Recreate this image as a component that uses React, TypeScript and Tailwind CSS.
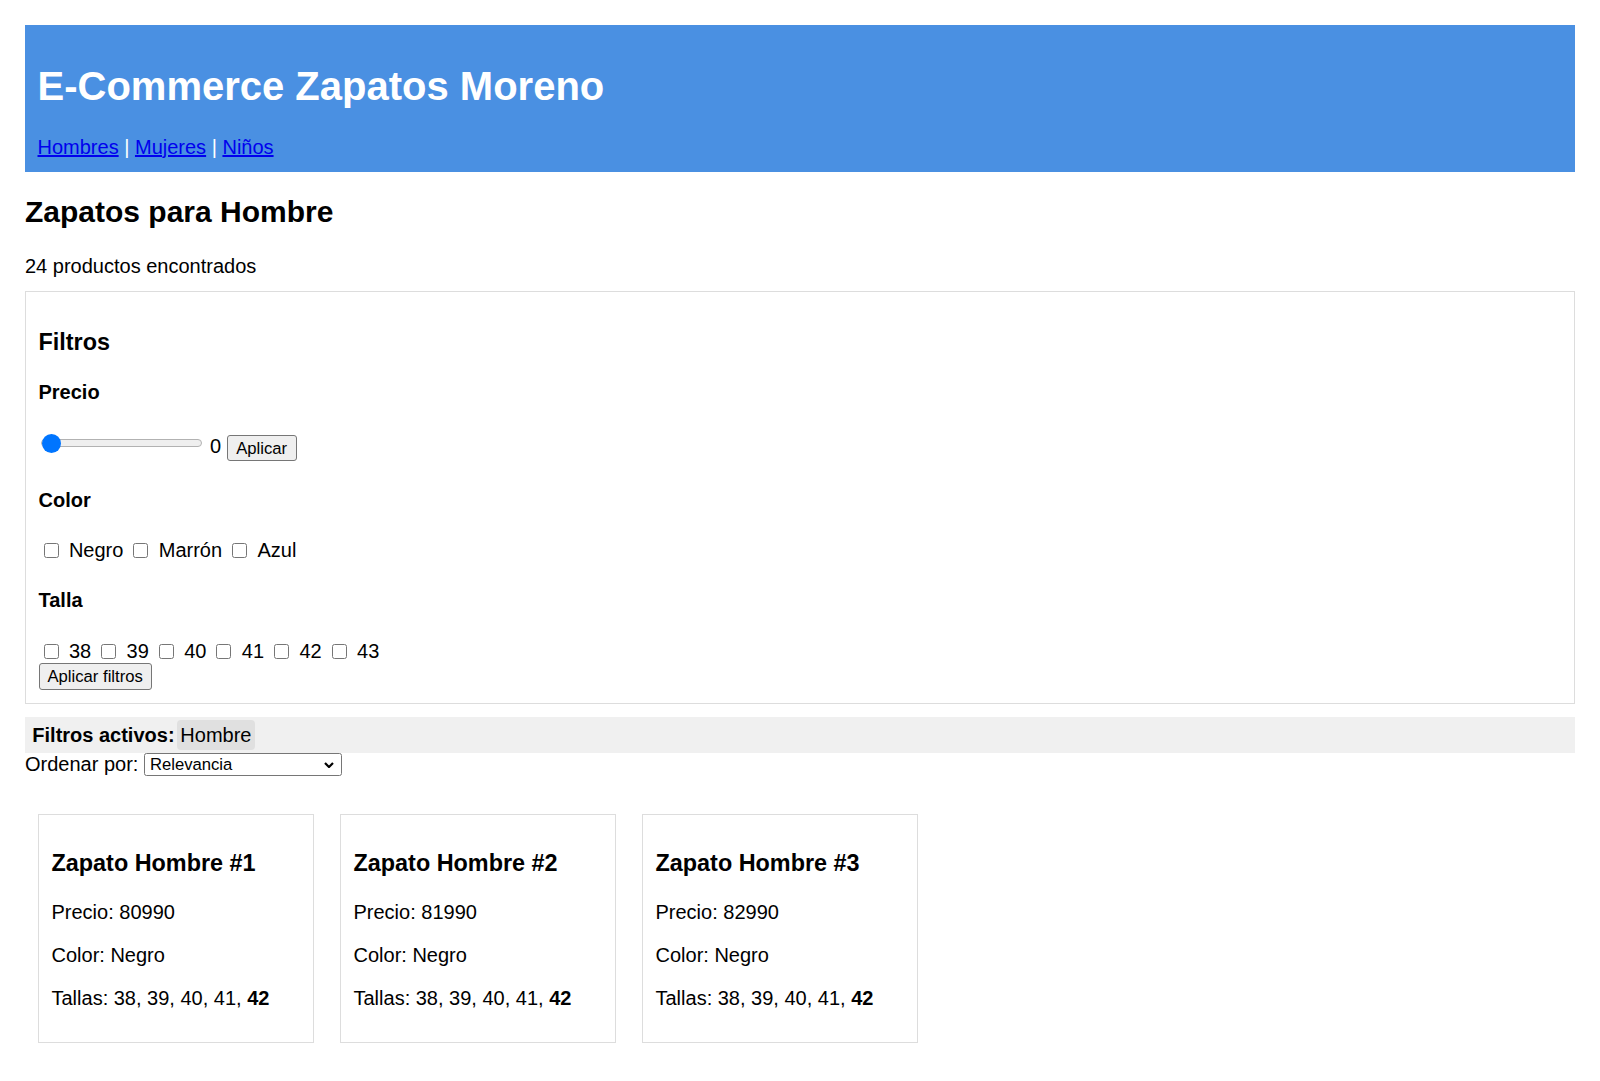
const COLORS = ["Negro", "Marrón", "Azul"];
const SIZES = ["38", "39", "40", "41", "42", "43"];

const products = [
  { id: 1, precio: 80990 },
  { id: 2, precio: 81990 },
  { id: 3, precio: 82990 },
];

function Check({ label }: { label: string }) {
  return (
    <label className="flex items-center">
      <input type="checkbox" className="m-0 ml-[5px] mr-[10.4px] h-[15px] w-[15px]" />
      <span className="mr-[5px]">{label}</span>
    </label>
  );
}

export default function App() {
  return (
    <div className="min-h-screen bg-white p-[25px] pb-0 font-['Liberation_Sans',Arial,Helvetica,sans-serif] text-[20px] leading-[23px] text-black">
      <header className="bg-[#4a90e2] px-[12.5px] pb-[13px] pt-[12.5px] text-white">
        <h1 className="mb-[27px] mt-[25px] text-[40px] font-bold leading-[46px]">E-Commerce Zapatos Moreno</h1>
        <nav>
          <a href="#" className="text-[#0000ee] underline">
            Hombres
          </a>{" "}
          |{" "}
          <a href="#" className="text-[#0000ee] underline">
            Mujeres
          </a>{" "}
          |{" "}
          <a href="#" className="text-[#0000ee] underline">
            Niños
          </a>
        </nav>
      </header>

      <h2 className="mb-[25.3px] mt-[23.4px] text-[30px] font-bold leading-[34.5px]">Zapatos para Hombre</h2>
      <p className="mb-[13px]">24 productos encontrados</p>

      <section className="border border-[#dddddd] px-[12.5px] pb-[13.3px] pt-[12.5px]">
        <h3 className="mt-[25px] text-[23.4px] font-bold leading-[27px]">Filtros</h3>

        <h4 className="mt-[25.3px] font-bold">Precio</h4>
        <div className="mt-[31px] flex h-[26px] items-start">
          <input
            type="range"
            min={0}
            max={200000}
            defaultValue={0}
            className="mx-[2.5px] mt-[-2px] h-[20px] w-[161px] appearance-none bg-transparent [&::-webkit-slider-runnable-track]:h-[8px] [&::-webkit-slider-runnable-track]:rounded-full [&::-webkit-slider-runnable-track]:border [&::-webkit-slider-runnable-track]:border-[#b2b2b2] [&::-webkit-slider-runnable-track]:bg-[#efefef] [&::-webkit-slider-thumb]:mt-[-6.5px] [&::-webkit-slider-thumb]:h-[19px] [&::-webkit-slider-thumb]:w-[19px] [&::-webkit-slider-thumb]:appearance-none [&::-webkit-slider-thumb]:rounded-full [&::-webkit-slider-thumb]:bg-[#0075ff]"
          />
          <span className="ml-[5.5px]">0</span>
          <button className="ml-[5.5px] h-[26px] rounded-[3px] border border-[#767676] bg-[#efefef] px-[8.5px] text-[16.67px] leading-[19px]">
            Aplicar
          </button>
        </div>

        <h4 className="mt-[27.7px] font-bold">Color</h4>
        <div className="mt-[27px] flex h-[23px] items-center">
          {COLORS.map((c) => (
            <Check key={c} label={c} />
          ))}
        </div>

        <h4 className="mt-[27px] font-bold">Talla</h4>
        <div className="mt-[28px] flex h-[23px] items-center">
          {SIZES.map((s) => (
            <Check key={s} label={s} />
          ))}
        </div>
        <button className="h-[27px] rounded-[3px] border border-[#767676] bg-[#efefef] px-[8px] text-[16.67px] leading-[19px]">
          Aplicar filtros
        </button>
      </section>

      <div className="mt-[13px] flex h-[35.5px] items-center bg-[#f0f0f0] px-[7.3px]">
        <strong className="font-bold">Filtros activos:</strong>
        <span className="ml-[2px] rounded-[4px] bg-[#e0e0e0] px-[3.8px] py-[3.5px]">Hombre</span>
      </div>

      <div className="flex h-[24px] items-center">
        <span>Ordenar por:</span>
        <div className="relative ml-[5.5px] flex">
          <select className="h-[23px] w-[198px] appearance-none rounded-[2.5px] border border-[#767676] bg-white pl-[5px] text-[16.67px] leading-[19px] text-black">
            <option>Relevancia</option>
            <option>Precio: menor a mayor</option>
            <option>Precio: mayor a menor</option>
          </select>
          <svg
            viewBox="0 0 10 6"
            className="pointer-events-none absolute right-[8px] top-[9px] h-[6px] w-[10px]"
            fill="none"
            stroke="#000"
            strokeWidth="2.2"
          >
            <polyline points="1,1 5,5 9,1" />
          </svg>
        </div>
      </div>

      <div className="mt-[36.6px] flex gap-[26px] px-[13px]">
        {products.map((p) => (
          <div key={p.id} className="w-[276px] border border-[#dddddd] px-[12.5px] pb-[11.6px] pt-[12.5px]">
            <h3 className="mt-[23.4px] text-[23.4px] font-bold leading-[27px]">Zapato Hombre #{p.id}</h3>
            <p className="mt-[23.5px]">Precio: {p.precio}</p>
            <p className="mt-[20px]">Color: Negro</p>
            <p className="mb-[20px] mt-[20px]">
              Tallas: 38, 39, 40, 41, <strong>42</strong>
            </p>
          </div>
        ))}
      </div>
    </div>
  );
}
